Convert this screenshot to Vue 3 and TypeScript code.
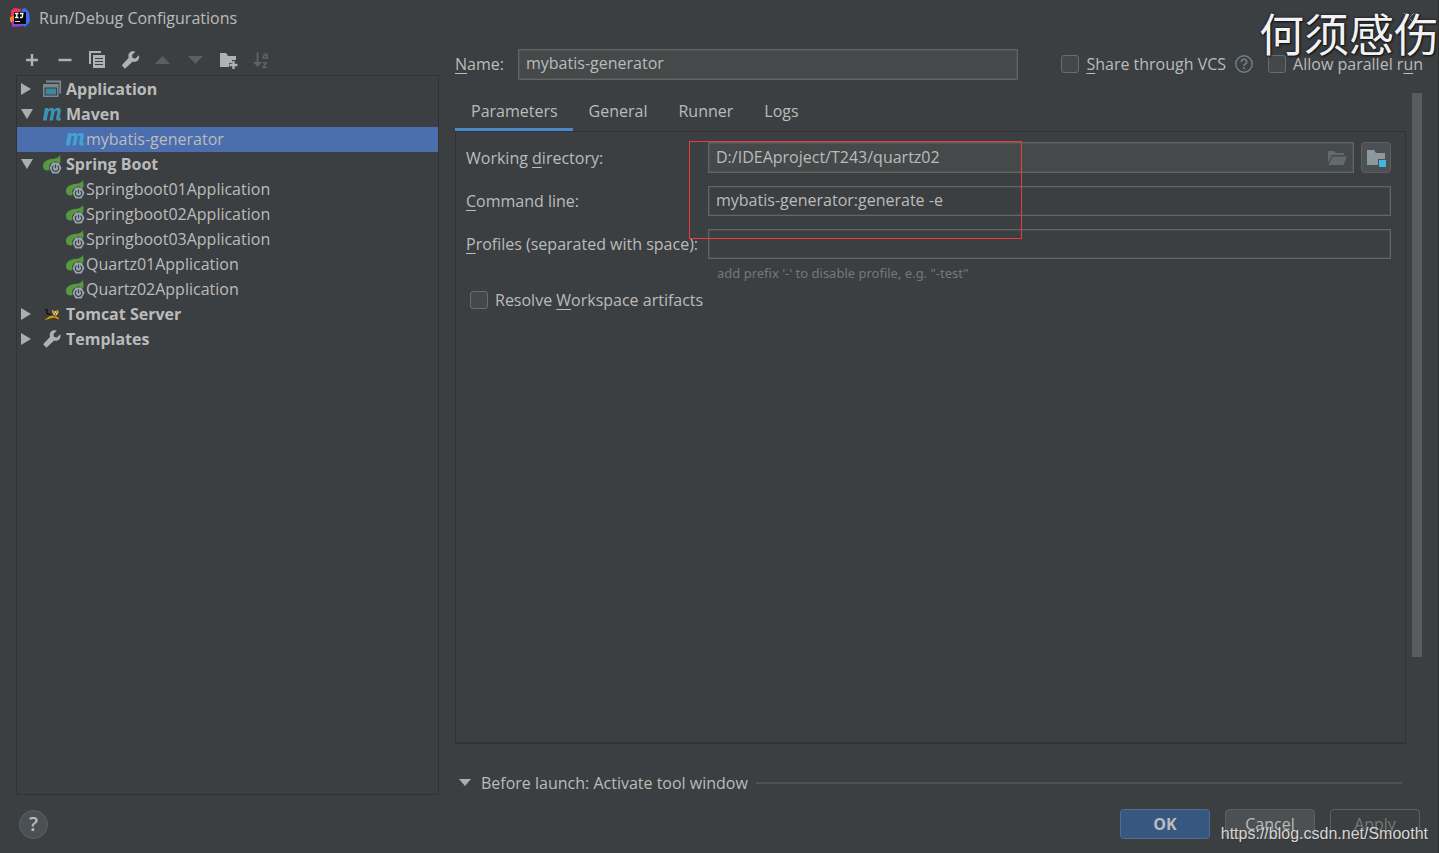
<script setup lang="ts">
import { ref } from 'vue'

interface Row {
  id: number
  label: string
  icon: 'app' | 'maven' | 'spring' | 'tomcat' | 'wrench'
  state?: 'open' | 'closed'
  child?: boolean
}

const rows: Row[] = [
  { id: 1, label: 'Application', icon: 'app', state: 'closed' },
  { id: 2, label: 'Maven', icon: 'maven', state: 'open' },
  { id: 3, label: 'mybatis-generator', icon: 'maven', child: true },
  { id: 4, label: 'Spring Boot', icon: 'spring', state: 'open' },
  { id: 5, label: 'Springboot01Application', icon: 'spring', child: true },
  { id: 6, label: 'Springboot02Application', icon: 'spring', child: true },
  { id: 7, label: 'Springboot03Application', icon: 'spring', child: true },
  { id: 8, label: 'Quartz01Application', icon: 'spring', child: true },
  { id: 9, label: 'Quartz02Application', icon: 'spring', child: true },
  { id: 10, label: 'Tomcat Server', icon: 'tomcat', state: 'closed' },
  { id: 11, label: 'Templates', icon: 'wrench', state: 'closed' },
]

const selected = ref(3)
const tabs = ['Parameters', 'General', 'Runner', 'Logs']
const activeTab = ref('Parameters')
const name = ref('mybatis-generator')
const directory = ref('D:/IDEAproject/T243/quartz02')
const command = ref('mybatis-generator:generate -e')
const profiles = ref('')
const share = ref(false)
const parallel = ref(false)
const resolve = ref(false)
</script>

<template>
  <div class="dialog">
    <header class="titlebar">
      <svg class="logo" width="20" height="20" viewBox="0 0 20 20">
        <path d="M1 3 4 0l7 1-2 8-8 3z" fill="#f5315d" />
        <path d="M0 9l4-1 3 8-3 1-4-4z" fill="#f58529" />
        <path d="M2 13l9 1 2 4-11 1z" fill="#a13bd1" />
        <path d="M12 1l3-1 4 4 1 10-5 5-5-3z" fill="#3f6df0" />
        <rect x="4" y="4" width="12" height="12" fill="#080808" />
        <path d="M5 5.500h3.500M6.750 5.500v4M5 9.500h3.500M10 5.500h3.500M12.500 5.500v3q0 1-1 1H10" fill="none" stroke="#fff" stroke-width="1.300" />
        <path d="M5 13.500h5" stroke="#ddd" stroke-width="1" />
      </svg>
      <h1>Run/Debug Configurations</h1>
    </header>

    <div class="main">
      <aside class="side">
        <div class="toolbar" role="toolbar" aria-label="Configurations">
          <button aria-label="Add"><svg viewBox="0 0 20 20"><path d="M10 4v12M4 10h12" stroke="#afb1b3" stroke-width="2.400" /></svg></button>
          <button aria-label="Remove"><svg viewBox="0 0 20 20"><path d="M3.500 10h13" stroke="#afb1b3" stroke-width="2.400" /></svg></button>
          <button aria-label="Copy"><svg viewBox="0 0 20 20">
            <path d="M2 14V2h11" fill="none" stroke="#afb1b3" stroke-width="2" />
            <path fill="#afb1b3" d="M5 5h12v13H5z" />
            <path d="M7 8.500h8M7 11.500h8M7 14.500h8" stroke="#3c3f41" stroke-width="1.200" />
          </svg></button>
          <button aria-label="Edit templates"><svg viewBox="0 0 20 20"><path fill="#afb1b3" d="M17.800 5.200 14.500 8.500l-2.900-.6-.6-2.900 3.300-3.300C12.200.8 10 1.300 8.700 2.600 7.400 3.900 7 5.900 7.700 7.700L.8 15.200l3.100 3.500 7.900-7.200c1.800.7 3.700.2 5-1.100s1.800-3.400 1-5.200z" /></svg></button>
          <button aria-label="Move up" disabled><svg viewBox="0 0 20 20"><path fill="#5c5e60" d="M8.500 6l7.500 8H1z" /></svg></button>
          <button aria-label="Move down" disabled><svg viewBox="0 0 20 20"><path fill="#5c5e60" d="M8.500 14L16 6H1z" /></svg></button>
          <button aria-label="New folder"><svg viewBox="0 0 20 20">
            <path fill="#afb1b3" d="M0 3h6l2 3h8v4h-4v3H9v4H0z" />
            <path d="M13.500 11v8M9.500 15h8" stroke="#afb1b3" stroke-width="2.400" />
          </svg></button>
          <button aria-label="Sort" disabled><svg viewBox="0 0 20 20">
            <path d="M4.500 2.500V14" stroke="#606264" stroke-width="1.800" /><path fill="#606264" d="M0 12h9l-4.500 5z" />
            <text x="9" y="9" class="az">a</text><text x="9" y="18" class="az">z</text>
          </svg></button>
        </div>

        <ul class="tree" role="tree">
          <li
            v-for="row in rows"
            :key="row.id"
            role="treeitem"
            :class="{ child: row.child, selected: selected === row.id }"
            @click="selected = row.id"
          >
            <span class="arrow">
              <svg v-if="row.state === 'closed'" width="12" height="12" viewBox="0 0 12 12"><path fill="#adadad" d="M0 0l10 6-10 6z" /></svg>
              <svg v-if="row.state === 'open'" width="12" height="12" viewBox="0 0 12 12"><path fill="#adadad" d="M0 1h12L6 11z" /></svg>
            </span>
            <svg v-if="row.icon === 'app'" class="icon" viewBox="0 0 20 20">
              <path d="M4 2.500h14.200v12" fill="none" stroke="#7a8890" stroke-width="1.800" />
              <path fill="#7a8890" d="M1 5h15.500v13H1z" /><path fill="#3c3f41" d="M2.500 8.500H15v8H2.500z" /><path fill="#3e86a0" d="M3.500 9.500H14v6H3.500z" />
            </svg>
            <svg v-else-if="row.icon === 'maven'" class="icon" viewBox="0 0 20 20">
              <path :fill="row.child ? '#43a1d3' : '#3d91b5'" d="M3 4h3.400l-.3 1.600Q7.700 3.700 9.500 3.700q2.300 0 2.700 2 1.500-2 3.700-2 3.500 0 2.900 3.800L17.700 13q-.2 1.200 1.300.9l-.4 2.700q-5.200 1-4.400-3.400l1-5q.3-1.700-.8-1.700-1.600 0-2.200 2.900l-1.300 7.100H7.500L9 8.200q.3-1.700-.8-1.700-1.600 0-2.200 2.900l-1.300 7.100H.8z" />
            </svg>
            <svg v-else-if="row.icon === 'spring'" class="icon" viewBox="0 0 20 20">
              <path fill="#57993f" d="M18 1Q16 5 9 5 1 6.500 1 12q0 4 4 4.500l5-.5 8-6q1-4 0-9z" />
              <circle cx="13.500" cy="14" r="6.500" fill="#3c3f41" />
              <path fill="#9aa7b0" d="M10.500 8.500h6l3 5.500-3 5.500h-6l-3-5.500z" />
              <path d="M11.500 11.700a3.200 3.200 0 1 0 4 0M13.500 10.500v3.700" fill="none" stroke="#3c3f41" stroke-width="1.200" />
            </svg>
            <svg v-else-if="row.icon === 'tomcat'" class="icon" viewBox="0 0 20 20">
              <path d="M3 6q3-1 2 2t4 2" fill="none" stroke="#15150f" stroke-width="1.500" />
              <path fill="#c8961e" stroke="#221d10" stroke-width=".6" d="M2 16l5-4 4-1 4 1 3 3-1 1-5-2-4 1-6 2z" />
              <path fill="#e5c16b" stroke="#221d10" stroke-width=".6" d="M9.500 5l2 1.500h3l2-1.500.5 4-2.500 3h-2L10 9z" />
              <path d="M11.500 8h1M14.500 8h1M13 10h1" stroke="#111" stroke-width="1" />
            </svg>
            <svg v-else class="icon" viewBox="0 0 20 20"><path fill="#afb1b3" d="M18.200 5.200 14.900 8.500l-2.900-.6-.6-2.900 3.300-3.300C12.600.8 10.400 1.300 9.100 2.600 7.800 3.900 7.400 5.900 8.100 7.700L1.200 15.200l3.100 3.500 7.900-7.200c1.800.7 3.700.2 5-1.100s1.800-3.400 1-5.200z" /></svg>
            <span>{{ row.label }}</span>
          </li>
        </ul>
      </aside>

      <section class="content">
        <div class="namerow">
          <label for="name"><u>N</u>ame:</label>
          <input id="name" v-model="name" class="field filled" type="text" />
          <div class="options">
            <label class="check"><input v-model="share" type="checkbox" /><span><u>S</u>hare through VCS</span></label>
            <button class="hint" aria-label="About sharing"><svg width="20" height="20" viewBox="0 0 20 20">
              <circle cx="10" cy="10" r="8.200" fill="none" stroke="#748087" stroke-width="1.400" />
              <path d="M7.300 8q0-2.800 2.700-2.800T12.700 8q0 1.200-1.400 2T10 12" fill="none" stroke="#748087" stroke-width="1.600" /><path fill="#748087" d="M9.100 13.200h1.800V15H9.100z" />
            </svg></button>
            <label class="check"><input v-model="parallel" type="checkbox" /><span>Allow parallel r<u>u</u>n</span></label>
          </div>
        </div>

        <div class="scroller">
          <div class="pane">
            <nav class="tabs" role="tablist">
              <button v-for="tab in tabs" :key="tab" role="tab" :aria-selected="activeTab === tab" @click="activeTab = tab">{{ tab }}</button>
            </nav>
            <div class="panel">
              <div class="form">
                <label for="dir">Working <u>d</u>irectory:</label>
                <div class="dirrow">
                  <div class="browse">
                    <input id="dir" v-model="directory" class="field filled" type="text" />
                    <button class="open" aria-label="Browse"><svg width="20" height="16" viewBox="0 0 20 16"><path fill="#626a6d" d="M1 1h6l2 2h8v2H5l-4 8z" /><path fill="#626a6d" d="M5.500 6.500H20L16.500 15H1.500z" /></svg></button>
                  </div>
                  <button class="module" aria-label="Insert path"><svg width="20" height="20" viewBox="0 0 20 20"><path fill="#8c979e" d="M1 2h7l2 3h9v6h-7v6H1z" /><path fill="#40b6e0" d="M13 12h7v7h-7z" /></svg></button>
                </div>
                <label for="cmd"><u>C</u>ommand line:</label>
                <input id="cmd" v-model="command" class="field" type="text" />
                <label for="prof"><u>P</u>rofiles (separated with space):</label>
                <input id="prof" v-model="profiles" class="field" type="text" />
                <div class="outline"></div>
              </div>
              <p class="help">add prefix '-' to disable profile, e.g. "-test"</p>
              <label class="check resolve"><input v-model="resolve" type="checkbox" /><span>Resolve <u>W</u>orkspace artifacts</span></label>
            </div>
            <button class="before">
              <svg width="12" height="8" viewBox="0 0 12 8"><path fill="#adadad" d="M0 0h12L6 7z" /></svg>
              <span>Before launch: Activate tool window</span>
              <i></i>
            </button>
          </div>
          <div class="track"><div class="thumb"></div></div>
        </div>
      </section>
    </div>

    <footer class="footer">
      <button class="helpbtn" aria-label="Help">?</button>
      <div class="actions">
        <button class="btn primary">OK</button>
        <button class="btn">Cancel</button>
        <button class="btn off" disabled>Apply</button>
      </div>
    </footer>

    <svg class="close" width="10" height="10" viewBox="0 0 10 10"><path d="M0 0l10 10M10 0L0 10" stroke="#9a9c9d" /></svg>
    <div class="author">何须感伤</div>
    <div class="link">https://blog.csdn.net/Smootht</div>
  </div>
</template>

<style>
html, body { margin: 0; background: #3c3f41; }
</style>

<style scoped>
* { box-sizing: border-box; }
.dialog {
  position: relative;
  display: flex;
  flex-direction: column;
  min-height: 100vh;
  overflow: hidden;
  background: #3c3f41;
  border-right: 1px solid #2c2e30;
  color: #bbbbbb;
  font: 16px/24px "Open Sans", "Noto Sans", sans-serif;
}
button { padding: 0; border: 0; background: none; color: inherit; font: inherit; }
svg { display: block; }
u { text-decoration: underline; text-underline-offset: 3px; text-decoration-skip-ink: none; }
.az { fill: #606264; font: 700 11px "Open Sans", sans-serif; }
.titlebar { display: flex; align-items: center; gap: 9px; height: 36px; padding-left: 10px; }
h1 { margin: 0; font-size: 16px; font-weight: 400; }
.main { display: flex; flex: 1; gap: 16px; }
.side { display: flex; flex: 0 0 439px; flex-direction: column; padding-left: 16px; }
.toolbar { display: flex; align-items: center; gap: 13px; height: 39px; padding: 9px 0 0 6px; }
.toolbar svg { width: 20px; height: 20px; overflow: visible; }
.tree { flex: 1; margin: 0; padding: 1px 0 0; list-style: none; border: 1px solid #323232; }
.tree li { display: flex; align-items: center; height: 25px; padding: 0 0 1px 3px; font-weight: 700; white-space: nowrap; }
.tree li.child { padding-left: 26px; font-weight: 400; }
.tree li.selected { background: #4b6eaf; }
.arrow { width: 22px; padding-left: 1px; }
.icon { width: 20px; height: 20px; margin-right: 4px; }
.child .icon { margin-right: 1px; }
.content { display: flex; flex: 1; flex-direction: column; min-width: 0; }
.namerow { display: flex; align-items: center; height: 56px; padding-right: 15px; }
.namerow > label { flex: 0 0 63px; }
.field {
  flex: 1;
  width: 100%;
  min-width: 0;
  height: 30px;
  padding: 0 7px 2px;
  border: 1px solid #646464;
  border-radius: 0;
  outline: 0;
  background: transparent;
  box-shadow: inset 0 0 0 1px #484b4d;
  color: #bbbbbb;
  font: inherit;
}
.field.filled { height: 31px; background: #45494a; box-shadow: inset 0 0 0 1px #505354; }
.options { display: flex; align-items: center; gap: 8px; margin-left: 43px; }
.check { display: flex; align-items: center; gap: 7px; white-space: nowrap; }
.check input { appearance: none; width: 18px; height: 18px; margin: 0; border: 1px solid #6b6b6b; border-radius: 3px; background: #43494a; }
.hint { margin-right: 6px; }
.scroller { display: flex; flex: 1; }
.pane { display: flex; flex: 1; flex-direction: column; min-width: 0; }
.tabs { display: flex; height: 39px; }
.tabs button { padding: 1px 15px 0 16px; border-bottom: 3px solid transparent; }
.tabs button[aria-selected="true"] { border-color: #4a88c7; }
.panel { flex: 1; padding: 10px 14px 0 10px; border: 1px solid #323232; border-bottom-width: 2px; }
.form { position: relative; display: grid; grid-template-columns: 242px 1fr; align-items: center; row-gap: 13px; white-space: nowrap; }
.dirrow { display: flex; gap: 7px; }
.browse { position: relative; flex: 1; }
.browse .field { display: block; }
.open { position: absolute; right: 7px; top: 8px; }
.module { display: grid; place-items: center; width: 30px; height: 31px; border: 1px solid #5e6060; border-radius: 4px; background: #4c5052; }
.outline { position: absolute; left: 223px; top: -1px; width: 333px; height: 98px; border: 1px solid #f03a37; pointer-events: none; }
.help { margin: 4px 0 0 251px; font-family: "Noto Sans", sans-serif; font-size: 13px; line-height: 20px; color: #777777; }
.resolve { margin: 5px 0 0 4px; }
.before { display: flex; align-items: center; height: 51px; padding: 27px 4px 0; text-align: left; }
.before span { margin: 0 8px 0 10px; }
.before i { flex: 1; height: 2px; background: #515151; }
.track { width: 17px; padding: 1px 0 0 6px; margin-right: 15px; }
.thumb { width: 10px; height: 564px; background: #595b5d; }
.footer { display: flex; align-items: center; justify-content: space-between; height: 58px; padding: 0 18px 0 19px; }
.helpbtn { width: 29px; height: 29px; border: 1px solid #5e6060; border-radius: 50%; background: #4c5052; font-size: 20px; font-weight: 600; line-height: 26px; }
.actions { display: flex; gap: 15px; }
.btn { width: 90px; height: 30px; border: 1px solid #5e6060; border-radius: 4px; background: #4c5052; }
.btn.primary { border-color: #4c708c; background: #365880; font-weight: 700; }
.btn.off { background: transparent; color: #777777; }
.close { position: absolute; right: 24px; top: 13px; }
.author { position: absolute; right: -1px; top: 6px; color: #f2f2f5; font: 45px/54px "Noto Sans CJK SC", sans-serif; text-shadow: 0 0 3px #111111, 1px 1px 2px #111111; white-space: nowrap; }
.link { position: absolute; right: 10px; bottom: 9px; color: #d5d5d5; font: 16px/20px "Liberation Sans", Arial, sans-serif; text-shadow: 1px 1px 1px #333333; }
</style>
